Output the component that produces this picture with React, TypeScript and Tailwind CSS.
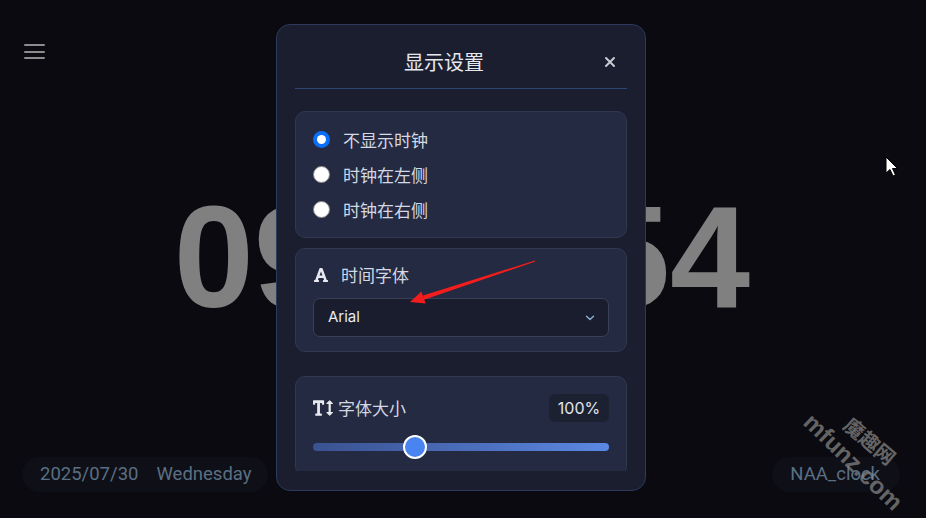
import React from "react";
import { FaFont, FaTextHeight } from "react-icons/fa";

export default function App() {
  const cjk = { fontFamily: '"Noto Sans CJK SC", "Noto Sans", sans-serif' };
  return (
    <div className="relative w-[926px] h-[518px] overflow-hidden bg-[#0a0a10] flex flex-col" style={{ fontFamily: 'Roboto, "Noto Sans CJK SC", sans-serif' }}>
      {/* hamburger */}
      <div className="pl-[24px] pt-[44px]">
        <div className="flex flex-col gap-[4.5px] w-[21px]">
          <div className="h-[2px] bg-[#8c8c8c] rounded" />
          <div className="h-[2px] bg-[#8c8c8c] rounded" />
          <div className="h-[2px] bg-[#8c8c8c] rounded" />
        </div>
      </div>

      {/* clock */}
      <div className="mt-[127px] flex justify-center">
        <div className="text-[144px] leading-none font-bold text-[#808080] tracking-normal pr-[2px]" style={{ fontFamily: '"Liberation Sans", Arial, sans-serif' }}>
          09:41:54
        </div>
      </div>

      {/* bottom */}
      <div className="mt-auto mb-[26px] flex justify-between px-[22px]">
        <div className="h-[35px] rounded-full bg-[#0f0f17] flex items-center pl-[18px] pr-[16px] gap-[18px] text-[18.5px] text-[#5a6f84]">
          <span>2025/07/30</span>
          <span>Wednesday</span>
        </div>
        <div className="h-[35px] rounded-full bg-[#0f0f17] flex items-center pl-[18px] pr-[20px] mr-[4px] text-[18.5px] text-[#5a6f84]">
          <span>NAA_clock</span>
        </div>
      </div>

      {/* modal */}
      <div className="absolute left-[276px] top-[24px] w-[370px] h-[467px] rounded-[14px] border border-[#2b3a5d] bg-[#1b1e2e] flex flex-col px-[18px] pb-[19px]" style={cjk}>
        <div className="pt-[23px] pb-[12px] border-b border-[#2d4675] flex items-center">
          <div className="flex-1 text-center text-[20px] leading-[28px] text-[#e6e8ee]">显示设置</div>
          <div className="w-[34px] h-[28px] flex items-center justify-center">
            <svg width="12" height="12" viewBox="0 0 12 12">
              <path d="M2 2 L10 10 M10 2 L2 10" stroke="#c9ccd4" strokeWidth="2" strokeLinecap="round" />
            </svg>
          </div>
        </div>

        <div className="flex-1 overflow-hidden">
          {/* radio section */}
          <div className="mt-[22px] rounded-[10px] border border-[#30384f] bg-[#232a41] px-[17px] py-[10px]">
            {[
              ["不显示时钟", true],
              ["时钟在左侧", false],
              ["时钟在右侧", false],
            ].map(([label, checked]) => (
              <div key={label as string} className="h-[35px] flex items-center gap-[13px]">
                {checked ? (
                  <div className="w-[17px] h-[17px] rounded-full bg-[#0b6ef6] flex items-center justify-center">
                    <div className="w-[9px] h-[9px] rounded-full bg-white" />
                  </div>
                ) : (
                  <div className="w-[17px] h-[17px] rounded-full bg-white border border-[#8a8a8a]" />
                )}
                <span className="text-[17px] text-[#d3d8e2]">{label as string}</span>
              </div>
            ))}
          </div>

          {/* font section */}
          <div className="mt-[10px] rounded-[10px] border border-[#30384f] bg-[#232a41] px-[17px] pt-[16px] pb-[14px]">
            <div className="h-[20px] flex items-center gap-[12px]">
              <FaFont size={16} color="#e8eaf0" />
              <span className="text-[17px] text-[#d3d8e2]">时间字体</span>
            </div>
            <div className="mt-[13px] h-[39px] rounded-[7px] border border-[#3a4157] bg-[#191d2d] flex items-center justify-between pl-[14px] pr-[13px]">
              <span className="text-[15px] text-[#e8eaf0]" style={{ fontFamily: 'Inter, "Noto Sans", sans-serif' }}>Arial</span>
              <svg width="10" height="6" viewBox="0 0 10 6">
                <path d="M1.5 1.2 L5 4.5 L8.5 1.2" stroke="#8fb0d6" strokeWidth="1.4" fill="none" strokeLinecap="round" strokeLinejoin="round" />
              </svg>
            </div>
          </div>

          {/* font size section */}
          <div className="mt-[24px] rounded-[10px] border border-[#30384f] bg-[#232a41] px-[17px] pt-[17px] pb-[16px]">
            <div className="h-[28px] flex items-center justify-between">
              <div className="flex items-center gap-[5px]">
                <FaTextHeight size={20} color="#e8eaf0" />
                <span className="text-[17px] text-[#d3d8e2]">字体大小</span>
              </div>
              <div className="h-[28px] w-[60px] rounded-[6px] bg-[#1c2132] flex items-center justify-center text-[16px] text-[#e2e5ec]" style={{ fontFamily: 'Inter, sans-serif' }}>
                100%
              </div>
            </div>
            <div className="relative mt-[13px] h-[24px] flex items-center">
              <div className="w-full h-[8px] rounded-full bg-gradient-to-r from-[#3a5290] to-[#5b88e3]" />
              <div className="absolute top-0 w-[24px] h-[24px] rounded-full bg-[#4a84f0] border-2 border-white" style={{ left: `${0.333 * 271}px` }} />
            </div>
          </div>
        </div>
      </div>

      {/* red annotation arrow */}
      <svg className="absolute left-0 top-0 pointer-events-none" width="926" height="518" viewBox="0 0 926 518">
        <polygon points="535,260.5 535.4,261.6 424,299.8 423,295.6" fill="#f21d1d" />
        <polygon points="410,302 421.4,291.5 425.6,303.6" fill="#f21d1d" />
        {/* cursor */}
        <path d="M886 157 L886 173 L890 169.5 L893 176 L895.5 175 L892.5 168.5 L897.5 168.5 Z" fill="#ffffff" stroke="#000000" strokeWidth="1" strokeLinejoin="round" />
      </svg>

      {/* watermark */}
      <div className="absolute left-[853px] top-[462px] -translate-x-1/2 -translate-y-1/2 rotate-[44deg] text-[24px] font-bold text-[#8a8a8a] opacity-70 whitespace-nowrap" style={{ fontFamily: '"Liberation Sans", Arial, sans-serif' }}>
        mfunz.com
      </div>
      <div className="absolute left-[870px] top-[441px] -translate-x-1/2 -translate-y-1/2 rotate-[40deg] text-[20px] font-bold text-[#8a8a8a] opacity-70 whitespace-nowrap" style={cjk}>
        魔趣网
      </div>
    </div>
  );
}
